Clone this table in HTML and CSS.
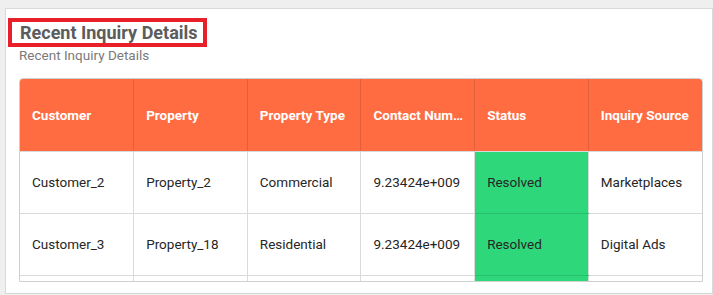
FILE: index.html
```html
<!DOCTYPE html>
<html>
<head>
<meta charset="utf-8">
<link rel="stylesheet" href="styles.css">
</head>
<body>
<div class="panel">
  <div class="title-box"><h1 class="title">Recent Inquiry Details</h1></div>
  <div class="subtitle">Recent Inquiry Details</div>
  <div class="grid-wrap">
    <table class="grid">
      <thead>
        <tr>
          <th>Customer</th>
          <th>Property</th>
          <th>Property Type</th>
          <th>Contact Number</th>
          <th>Status</th>
          <th>Inquiry Source</th>
        </tr>
      </thead>
      <tbody>
        <tr>
          <td>Customer_2</td>
          <td>Property_2</td>
          <td>Commercial</td>
          <td>9.23424e+009</td>
          <td class="ok">Resolved</td>
          <td>Marketplaces</td>
        </tr>
        <tr>
          <td>Customer_3</td>
          <td>Property_18</td>
          <td>Residential</td>
          <td>9.23424e+009</td>
          <td class="ok">Resolved</td>
          <td>Digital Ads</td>
        </tr>
        <tr>
          <td></td>
          <td></td>
          <td></td>
          <td></td>
          <td class="ok"></td>
          <td></td>
        </tr>
      </tbody>
    </table>
  </div>
</div>
</body>
</html>
```

FILE: styles.css
```css
* { box-sizing: border-box; }
html, body { margin: 0; padding: 0; }
body {
  background: #efefef;
  font-family: Roboto, "Liberation Sans", sans-serif;
  width: 713px;
  height: 295px;
  overflow: hidden;
}
.panel {
  margin: 8px 0 0 5px;
  width: 708px;
  height: 286px;
  background: #fff;
  border: 1px solid #d9d9d9;
  padding: 9px 9px 0 2px;
}
.title-box {
  display: inline-block;
  border: 4px solid #e8202a;
  padding: 0 5px 0 8px;
  height: 29px;
}
.title {
  margin: 0;
  font-size: 18px;
  font-weight: 700;
  color: #5c5c5c;
  line-height: 21px;
}
.subtitle {
  margin: 0 0 0 11px;
  font-size: 13.5px;
  color: #7a7a7a;
  line-height: 16px;
  height: 31px;
}
.grid-wrap {
  margin-left: 11px;
  width: 684px;
  height: 204px;
  border: 1px solid #cfcfcf;
  border-radius: 4px 4px 0 0;
  overflow: hidden;
}
.grid {
  width: 100%;
  table-layout: fixed;
  border-collapse: collapse;
}
.grid th, .grid td {
  padding: 0 12px;
  text-align: left;
  white-space: nowrap;
  overflow: hidden;
  text-overflow: ellipsis;
  font-size: 13.5px;
}
.grid th {
  height: 72px;
  padding-right: 5px;
  background: #ff6c41;
  color: #fff;
  font-weight: 700;
  border-left: 1px solid #e0603a;
  border-bottom: 1px solid #d8d8d8;
}
.grid th:first-child, .grid td:first-child { border-left: none; }
.grid td {
  height: 62px;
  color: #262626;
  border-left: 1px solid #dadada;
  border-bottom: 1px solid #dadada;
}
.grid td.ok {
  background: #2ed87a;
  border-bottom-color: #27c06b;
  border-left-color: #dadada;
}
```
